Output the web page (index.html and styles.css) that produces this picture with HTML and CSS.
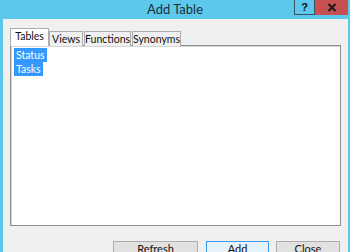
FILE: index.html
```html
<!DOCTYPE html>
<html>
<head>
<meta charset="utf-8">
<link rel="stylesheet" href="styles.css">
</head>
<body>
<div class="window">
  <div class="titlebar">
    <span class="title">Add Table</span>
    <div class="controls">
      <div class="btn-help">?</div>
      <div class="btn-close">
        <svg width="10" height="9" viewBox="0 0 10 9"><path d="M1.5 1 L8.5 8 M8.5 1 L1.5 8" stroke="#1a1a1a" stroke-width="2" fill="none"/></svg>
      </div>
    </div>
  </div>
  <div class="client">
    <div class="tabstrip">
      <div class="tab active w-tables">Tables</div>
      <div class="tab w-views">Views</div>
      <div class="tab w-functions">Functions</div>
      <div class="tab w-synonyms">Synonyms</div>
    </div>
    <div class="panel">
      <div class="item"><span class="sel">Status</span></div>
      <div class="item"><span class="sel">Tasks</span></div>
    </div>
    <div class="buttons">
      <div class="button w-refresh">Refresh</div>
      <div class="button default w-add">Add</div>
      <div class="button w-close">Close</div>
    </div>
  </div>
</div>
</body>
</html>
```
FILE: styles.css
```css
html, body {
  margin: 0;
  padding: 0;
  width: 350px;
  height: 252px;
  overflow: hidden;
  font-family: Lato, "Liberation Sans", sans-serif;
}
.window {
  width: 350px;
  height: 252px;
  overflow: hidden;
  background: #5cc8ec;
  display: flex;
  flex-direction: column;
}
.titlebar {
  height: 19px;
  flex: none;
  position: relative;
  display: flex;
  justify-content: center;
}
.title {
  font-size: 13px;
  line-height: 19px;
  color: #1e2f38;
}
.controls {
  position: absolute;
  top: 0;
  right: 2px;
  display: flex;
}
.btn-help {
  width: 19px;
  height: 14px;
  border: 1px solid #38545f;
  border-top: none;
  background: #5cc8ec;
  font-family: "Liberation Sans", sans-serif;
  font-weight: bold;
  font-size: 11px;
  line-height: 14px;
  text-align: center;
  color: #111;
}
.btn-close {
  width: 33px;
  height: 15px;
  background: #c75050;
  display: flex;
  align-items: center;
  justify-content: center;
}
.client {
  flex: 1;
  min-height: 0;
  margin: 0 2px 0 3px;
  background: #f0f0f0;
  padding: 10px 7px 0 7px;
  display: flex;
  flex-direction: column;
}
.tabstrip {
  flex: none;
  display: flex;
  align-items: flex-end;
  height: 17px;
  position: relative;
  z-index: 1;
  margin-bottom: -1px;
}
.tab {
  box-sizing: border-box;
  height: 15px;
  border: 1px solid #acacac;
  border-bottom: none;
  background: #f0f0f0;
  font-size: 10.5px;
  line-height: 14px;
  text-align: center;
  color: #111;
  margin-right: 1px;
}
.tab.active {
  height: 18px;
  background: #ffffff;
  line-height: 15px;
  margin-right: 0;
}
.w-tables { width: 39px; }
.w-views { width: 34px; }
.w-functions { width: 47px; }
.w-synonyms { width: 49px; }
.panel {
  flex: none;
  box-sizing: border-box;
  height: 181px;
  background: #ffffff;
  border: 1px solid #8f8f8f;
  box-shadow: inset 1px 1px 0 #d5d5d5;
  padding: 2px 3px;
}
.item {
  display: flex;
  height: 14px;
}
.sel {
  display: block;
  background: #3399ff;
  color: #ffffff;
  font-size: 10.5px;
  line-height: 14px;
  padding: 0 2px;
  min-width: 23px;
}
.buttons {
  flex: none;
  display: flex;
  justify-content: flex-end;
  margin-top: 15px;
  margin-right: 1px;
}
.button {
  box-sizing: border-box;
  height: 23px;
  border: 1px solid #adadad;
  background: #e1e1e1;
  font-size: 11px;
  line-height: 14px;
  padding-top: 0;
  text-align: center;
  color: #111;
  margin-left: 8px;
}
.button.default {
  border-color: #3c9ae8;
  background: #e5f1fb;
}
.w-refresh { width: 85px; }
.w-add { width: 63px; }
.w-close { width: 64px; margin-left: 7px; }
```
